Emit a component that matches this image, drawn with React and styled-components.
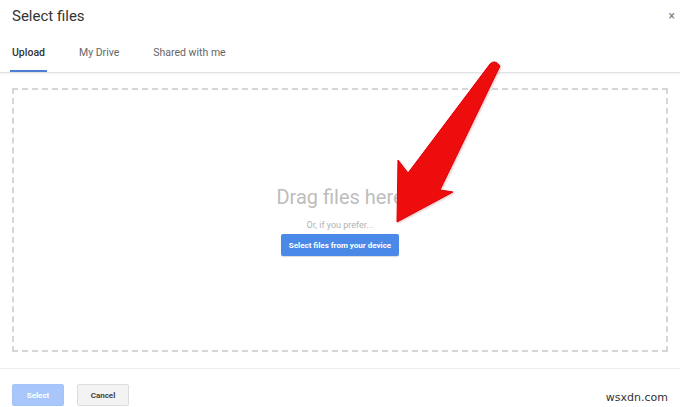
import React from 'react';
import styled, { createGlobalStyle } from 'styled-components';

const Global = createGlobalStyle`
    *, *::before, *::after {
        box-sizing: border-box;
    }
    html, body {
        margin: 0;
        padding: 0;
        background: #fff;
    }
    body {
        font-family: Roboto, "Liberation Sans", Arial, sans-serif;
    }
`

const Dialog = styled.div`
    position: relative;
    display: flex;
    flex-direction: column;
    width: 680px;
    height: 407px;
    overflow: hidden;
    background: #fff;
`

const Header = styled.div`
    display: flex;
    align-items: center;
    justify-content: space-between;
    height: 32px;
    padding: 0 5px 0 12px;
`

const Title = styled.h1`
    margin: 0;
    font-size: 15px;
    font-weight: 400;
    color: #333;
`

const Close = styled.span`
    font-size: 12px;
    color: #777;
    line-height: 1;
`

const Tabs = styled.div`
    display: flex;
    height: 41px;
    padding: 0 0 0 10px;
    gap: 30px;
    border-bottom: 1px solid #e3e3e3;
    box-shadow: 0 1px 2px rgba(0, 0, 0, 0.06);
`

const Tab = styled.div`
    display: flex;
    align-items: center;
    padding: 2px 2px 0 2px;
    font-size: 10.5px;
    font-weight: ${props => (props.active ? 500 : 400)};
    color: ${props => (props.active ? '#333' : '#666')};
    border-bottom: 2px solid ${props => (props.active ? '#4f7fd1' : 'transparent')};
`

const Body = styled.div`
    flex: 1;
    display: flex;
    padding: 15px 12px 16px 12px;
`

const DropZone = styled.div`
    flex: 1;
    display: flex;
    flex-direction: column;
    align-items: center;
    padding-top: 95px;
    border: 2px dashed #d6d6d6;
`

const DragText = styled.div`
    font-size: 20px;
    line-height: 24px;
    color: #bdbdbd;
`

const Prefer = styled.div`
    margin-top: 10px;
    font-size: 9px;
    line-height: 12px;
    color: #b3b3b3;
`

const DeviceButton = styled.button`
    margin-top: 3px;
    width: 118px;
    height: 22px;
    padding: 0;
    border: none;
    border-radius: 2px;
    background: #4a89e8;
    color: #fff;
    font-family: inherit;
    font-size: 8px;
    font-weight: 700;
    box-shadow: 0 1px 1px rgba(0, 0, 0, 0.15);
`

const Footer = styled.div`
    display: flex;
    gap: 13px;
    height: 39px;
    padding: 15px 12px 0 12px;
    border-top: 1px solid #ececec;
`

const FooterButton = styled.button`
    width: 52px;
    height: 22px;
    padding: 0;
    border-radius: 2px;
    font-family: inherit;
    font-size: 8px;
    font-weight: 700;
    border: 1px solid ${props => (props.primary ? '#a5c3f7' : '#dcdcdc')};
    background: ${props => (props.primary ? '#a8c6f9' : '#f3f3f3')};
    color: ${props => (props.primary ? '#fff' : '#444')};
`

const Watermark = styled.div`
    position: absolute;
    right: 12px;
    bottom: 3px;
    font-family: "DejaVu Sans", sans-serif;
    font-size: 11px;
    color: #333;
    background: rgba(255, 255, 255, 0.8);
`

const ArrowLayer = styled.svg`
    position: absolute;
    left: 0;
    top: 0;
    pointer-events: none;
`

const Arrow = () => (
    <ArrowLayer width="680" height="407" viewBox="0 0 680 407">
        <defs>
            <filter id="soft" x="-20%" y="-20%" width="140%" height="140%">
                <feDropShadow dx="1" dy="1" stdDeviation="1" floodColor="#900" floodOpacity="0.25" />
            </filter>
        </defs>
        <path
            d="M490 64 Q495 59 500 66 L440 190 L453 192 L397 222 L398 160 L408 173 Z"
            fill="#ee0a0f"
            stroke="#e00008"
            strokeWidth="1"
            strokeLinejoin="round"
            filter="url(#soft)"
        />
    </ArrowLayer>
)

const App = () => (
    <Dialog>
        <Global />
        <Header>
            <Title>Select files</Title>
            <Close>×</Close>
        </Header>
        <Tabs>
            <Tab active>Upload</Tab>
            <Tab>My Drive</Tab>
            <Tab>Shared with me</Tab>
        </Tabs>
        <Body>
            <DropZone>
                <DragText>Drag files here</DragText>
                <Prefer>Or, if you prefer...</Prefer>
                <DeviceButton>Select files from your device</DeviceButton>
            </DropZone>
        </Body>
        <Footer>
            <FooterButton primary>Select</FooterButton>
            <FooterButton>Cancel</FooterButton>
        </Footer>
        <Arrow />
        <Watermark>wsxdn.com</Watermark>
    </Dialog>
)

export default App;
